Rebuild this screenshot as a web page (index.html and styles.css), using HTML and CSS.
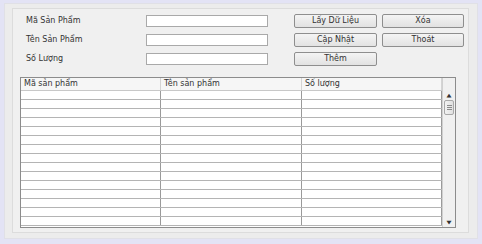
FILE: index.html
```html
<!DOCTYPE html>
<html lang="vi">
  <head>
    <meta charset="UTF-8" />
    <title>Quản Lý Sản Phẩm</title>
    <link rel="stylesheet" href="styles.css">
  </head>
  <body>
    <div class="window">
      <div class="panel">
        <div class="form">
          <label class="label">Mã Sản Phẩm</label>
          <input class="field" type="text" />
          <button class="btn">Lấy Dữ Liệu</button>
          <button class="btn btn-alt">Xóa</button>

          <label class="label">Tên Sản Phẩm</label>
          <input class="field" type="text" />
          <button class="btn">Cập Nhật</button>
          <button class="btn btn-alt">Thoát</button>

          <label class="label">Số Lượng</label>
          <input class="field" type="text" />
          <button class="btn">Thêm</button>
        </div>

        <div class="grid">
          <div class="grid-main">
            <div class="grid-head">
              <div class="cell">Mã sản phẩm</div>
              <div class="cell">Tên sản phẩm</div>
              <div class="cell">Số lượng</div>
            </div>
            <div id="grid-body"></div>
          </div>
          <div class="scroll">
            <div class="scroll-top"></div>
            <div class="scroll-arrow">&#9650;</div>
            <div class="scroll-thumb"><span></span><span></span><span></span></div>
            <div class="scroll-track"></div>
            <div class="scroll-arrow">&#9660;</div>
          </div>
        </div>
      </div>
    </div>
    <script>
      const body = document.getElementById("grid-body");
      // empty rows
      for (let i = 0; i < 15; i++) {
        const row = document.createElement("div");
        row.className = "grid-row";
        for (let j = 0; j < 3; j++) {
          const cell = document.createElement("div");
          cell.className = "cell";
          row.appendChild(cell);
        }
        body.appendChild(row);
      }
    </script>
  </body>
</html>
```

FILE: styles.css
```css
:root {
  --outer: #e3e3f5;
  --frame: #ececec;
  --panel: #f0f0f0;
  --line: #b4b4b4;
  --text: #333;
}
body {
  margin: 0;
  background: var(--outer);
  font-family: "DejaVu Sans", Tahoma, sans-serif;
  font-size: 8px;
  color: var(--text);
}
.window {
  margin: 3px 4px 5px 4px;
  height: 236px;
  box-sizing: border-box;
  background: var(--frame);
  border: 1px solid #e0e0e6;
  padding: 4px 8px 5px 7px;
}
.panel {
  height: 100%;
  box-sizing: border-box;
  background: var(--panel);
  border: 1px solid #dcdcdc;
  padding: 6px 12px 0 7px;
}
.form {
  display: grid;
  grid-template-columns: 120px 122px 109px 87px;
  grid-auto-rows: 12px;
  row-gap: 7px;
  padding-left: 6px;
  align-items: center;
}
.label {
  line-height: 12px;
}
.field {
  width: 122px;
  height: 12px;
  box-sizing: border-box;
  border: 1px solid #a9a9a9;
  background: #fff;
  margin: 0;
  padding: 0;
}
.btn {
  justify-self: end;
  width: 83px;
  height: 14px;
  box-sizing: border-box;
  margin: 0;
  padding: 0;
  border: 1px solid #8e8e8e;
  border-radius: 2px;
  background: linear-gradient(#f4f4f4, #e2e2e2);
  font-family: inherit;
  font-size: 8px;
  color: var(--text);
  line-height: 12px;
}
.btn-alt {
  width: 82px;
}
.grid {
  display: flex;
  margin-top: 12px;
  width: 436px;
  height: 151px;
  box-sizing: border-box;
  border: 1px solid #8c8c8c;
  background: #fff;
}
.grid-main {
  width: 421px;
}
.grid-head,
.grid-row {
  display: grid;
  grid-template-columns: 140px 141px 140px;
}
.grid-head {
  height: 13px;
  background: #f6f6f6;
  border-bottom: 1px solid #c8c8c8;
  box-sizing: border-box;
}
.grid-head .cell {
  padding-left: 3px;
  line-height: 12px;
  border-right: 1px solid #d4d4d4;
}
.grid-row {
  height: 9px;
  box-sizing: border-box;
  border-bottom: 1px solid var(--line);
}
.grid-row .cell {
  border-right: 1px solid #9a9a9a;
}
.scroll {
  width: 14px;
  display: flex;
  flex-direction: column;
  align-items: center;
  background: var(--panel);
  border-left: 1px solid #d0d0d0;
}
.scroll-top {
  height: 13px;
  width: 100%;
}
.scroll-arrow {
  height: 9px;
  font-size: 5px;
  line-height: 9px;
  color: #333;
  transform: scaleX(1.3);
}
.scroll-thumb {
  width: 10px;
  height: 15px;
  box-sizing: border-box;
  border: 1px solid #a8a8a8;
  border-radius: 2px;
  background: linear-gradient(90deg, #f2f2f2, #e0e0e0);
  display: flex;
  flex-direction: column;
  justify-content: center;
  align-items: center;
  gap: 1px;
}
.scroll-thumb span {
  width: 5px;
  height: 1px;
  background: #8a8a8a;
}
.scroll-track {
  flex: 1;
}
```
